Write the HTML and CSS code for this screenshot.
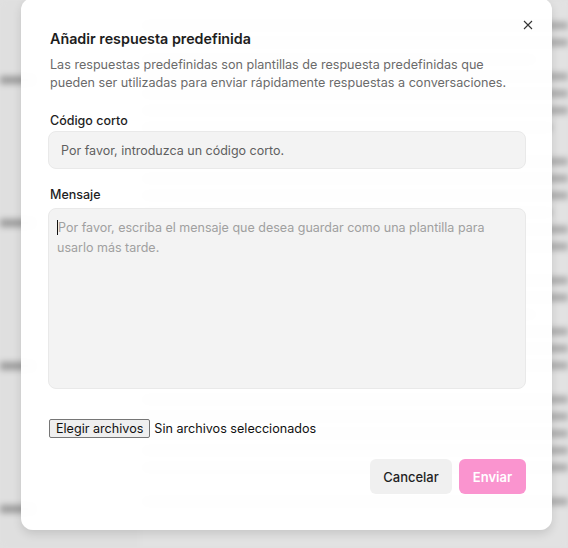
FILE: index.html
```html
<!DOCTYPE html>
<html lang="es">
<head>
<meta charset="utf-8">
<title>Añadir respuesta predefinida</title>
<link rel="stylesheet" href="styles.css">
</head>
<body>
<div class="backdrop" aria-hidden="true">
  <aside class="side">
    <div class="side-item"></div>
    <div class="side-item"></div>
    <div class="side-item"></div>
    <div class="side-item"></div>
  </aside>
  <main class="page">
    <div class="para">
      <div class="line"></div><div class="line"></div><div class="line short"></div><div class="line"></div><div class="line"></div><div class="line"></div><div class="line mid"></div>
    </div>
    <div class="para">
      <div class="line"></div><div class="line"></div><div class="line"></div><div class="line mid"></div><div class="line"></div><div class="line"></div>
    </div>
    <div class="para">
      <div class="line"></div><div class="line"></div><div class="line short"></div><div class="line"></div><div class="line"></div><div class="line"></div>
    </div>
    <div class="para">
      <div class="line"></div><div class="line"></div><div class="line"></div><div class="line"></div><div class="line"></div>
    </div>
    <div class="para">
      <div class="line"></div>
    </div>
  </main>
</div>

<div class="overlay">
  <div class="modal" role="dialog">
    <button class="close" aria-label="Cerrar">
      <svg width="10" height="10" viewBox="0 0 10 10"><path d="M1 1 L9 9 M9 1 L1 9" stroke="#333" stroke-width="1.1" fill="none"/></svg>
    </button>
    <h2 class="title">Añadir respuesta predefinida</h2>
    <p class="desc">Las respuestas predefinidas son plantillas de respuesta predefinidas que pueden ser utilizadas para enviar rápidamente respuestas a conversaciones.</p>

    <label class="label">Código corto</label>
    <div class="input"><span class="ph-dark">Por favor, introduzca un código corto.</span></div>

    <label class="label label-msg">Mensaje</label>
    <div class="textarea"><span class="caret"></span><span class="ph-light">Por favor, escriba el mensaje que desea guardar como una plantilla para usarlo más tarde.</span></div>

    <div class="file">
      <span class="file-btn">Elegir archivos</span>
      <span class="file-text">Sin archivos seleccionados</span>
    </div>

    <div class="actions">
      <button class="btn btn-cancel">Cancelar</button>
      <button class="btn btn-send">Enviar</button>
    </div>
  </div>
</div>
</body>
</html>
```

FILE: styles.css
```css
* { box-sizing: border-box; }
html, body { margin: 0; padding: 0; }
body {
  width: 568px;
  height: 548px;
  overflow: hidden;
  position: relative;
  font-family: Inter, "Noto Sans", sans-serif;
  background: #e1e1e1;
}

.backdrop {
  display: flex;
  height: 548px;
  filter: blur(3.2px);
}
.side {
  width: 140px;
  background: #dfdfdf;
  padding-top: 76px;
}
.side-item {
  width: 34px;
  height: 8px;
  background: #9a9a9a;
  margin: 0 0 135px 0;
}
.page {
  flex: 1;
  background: #e2e2e2;
  padding: 22px 0 0 4px;
}
.para { margin-bottom: 27px; }
.line {
  height: 7px;
  margin-bottom: 10px;
  background: #a6a6a6;
  width: 100%;
}
.line.short { width: 92%; }
.line.mid { width: 96%; }

.overlay {
  position: absolute;
  inset: 0;
}
.modal {
  position: absolute;
  left: 21px;
  top: -2px;
  width: 531px;
  height: 532px;
  background: rgba(255,255,255,0.98);
  border-radius: 12px;
  box-shadow: 0 4px 10px rgba(0,0,0,0.12);
  padding: 30px 26px 0 27px;
  display: flex;
  flex-direction: column;
}
.close {
  position: absolute;
  right: 19px;
  top: 22px;
  width: 10px;
  height: 10px;
  padding: 0;
  border: 0;
  background: none;
  display: flex;
}
.title {
  margin: 0 0 0 2px;
  font-size: 14.3px;
  font-weight: 600;
  line-height: 22px;
  color: #1d1d1d;
}
.desc {
  margin: 6px 0 0 2px;
  max-width: 462px;
  font-size: 12.6px;
  line-height: 18px;
  color: #6b6b6b;
}
.label {
  display: block;
  margin: 20px 0 0 2px;
  font-size: 12.5px;
  font-weight: 500;
  line-height: 18px;
  color: #1f1f1f;
}
.label-msg { margin-top: 17px; }
.input {
  margin-top: 1px;
  height: 38px;
  background: #f3f3f3;
  border: 1px solid #e9e9e9;
  border-radius: 8px;
  padding: 0 12px;
  display: flex;
  align-items: center;
  font-size: 12.5px;
}
.ph-dark { color: #5f5f5f; }
.textarea {
  margin-top: 4px;
  height: 181px;
  background: #f3f3f3;
  border: 1px solid #e9e9e9;
  border-radius: 8px;
  padding: 9px 12px 0 8px;
  font-size: 12.5px;
  line-height: 20px;
  position: relative;
}
.caret {
  display: inline-block;
  width: 1px;
  height: 15px;
  background: #111;
  vertical-align: -3px;
}
.ph-light { color: #a0a0a0; }

.file {
  margin-top: 30px;
  margin-left: 1px;
  display: flex;
  align-items: center;
  gap: 4px;
  font-size: 12.6px;
  color: #111;
}
.file-btn {
  background: #efefef;
  border: 1px solid #767676;
  border-radius: 2px;
  padding: 0 6px;
  line-height: 17px;
  height: 19px;
}
.actions {
  margin-top: 21px;
  display: flex;
  justify-content: flex-end;
  gap: 7px;
}
.btn {
  height: 35px;
  border: 0;
  border-radius: 6px;
  font-family: Inter, "Noto Sans", sans-serif;
  font-size: 13px;
  padding: 0 12px;
}
.btn-cancel {
  width: 82px;
  background: #f0f0f0;
  color: #1f1f1f;
  font-weight: 500;
}
.btn-send {
  width: 67px;
  background: #fa94cf;
  color: #fff;
  font-weight: 600;
}
```
